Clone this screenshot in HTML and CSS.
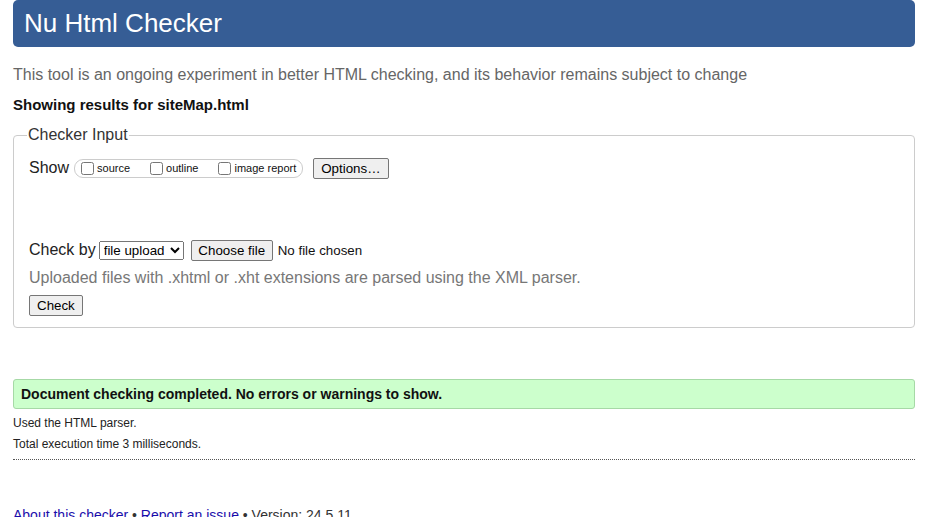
FILE: index.html
```html
<!DOCTYPE html>
<html>
<head>
<meta charset="utf-8">
<title>Nu Html Checker</title>
<link rel="stylesheet" href="styles.css">
</head>
<body>
<h1 class="title">Nu Html Checker</h1>
<p class="intro">This tool is an ongoing experiment in better HTML checking, and its behavior remains subject to change</p>
<p class="showing">Showing results for siteMap.html</p>
<fieldset class="input">
  <legend class="legend">Checker Input</legend>
  <div class="show-row">
    <span class="lbl">Show</span>
    <span class="opts">
      <label class="opt"><input type="checkbox" class="cb">source</label>
      <label class="opt"><input type="checkbox" class="cb">outline</label>
      <label class="opt"><input type="checkbox" class="cb">image report</label>
    </span>
    <button class="btn" type="button">Options…</button>
  </div>
  <div class="check-row">
    <span class="lbl">Check by</span>
    <select class="sel"><option>file upload</option></select>
    <button class="btn choose" type="button">Choose file</button>
    <span class="nofile">No file chosen</span>
  </div>
  <p class="note">Uploaded files with .xhtml or .xht extensions are parsed using the XML parser.</p>
  <button class="btn check" type="button">Check</button>
</fieldset>
<div class="success">Document checking completed. No errors or warnings to show.</div>
<p class="small">Used the HTML parser.</p>
<p class="small">Total execution time 3 milliseconds.</p>
<hr class="sep">
<p class="footer"><a href="#">About this checker</a> • <a href="#">Report an issue</a> • Version: 24.5.11</p>
</body>
</html>
```
FILE: styles.css
```css
html, body {
  margin: 0;
  padding: 0;
  background: #fff;
}
body {
  padding: 0 13px;
  font-family: "Liberation Sans", Arial, sans-serif;
  color: #111;
}
.title {
  margin: 0;
  height: 47px;
  box-sizing: border-box;
  background: #365d95;
  color: #fff;
  border-radius: 5px;
  font-weight: normal;
  font-size: 26px;
  line-height: 46px;
  padding-left: 11px;
}
.intro {
  margin: 18px 0 0;
  font-size: 16px;
  line-height: 20px;
  color: #666;
}
.showing {
  margin: 10px 0 0;
  font-size: 15px;
  line-height: 20px;
  font-weight: bold;
}
.input {
  margin: 11px 0 0;
  padding: 13px 15px 11px;
  border: 1px solid #ccc;
  border-radius: 4px;
  min-width: 0;
}
.legend {
  font-size: 16px;
  color: #333;
  padding: 0 1px;
  margin-left: -2px;
}
.show-row {
  display: flex;
  align-items: center;
  height: 22px;
}
.lbl {
  font-size: 16px;
  color: #222;
  margin-right: 5px;
}
.opts {
  display: inline-flex;
  align-items: center;
  height: 19px;
  box-sizing: border-box;
  border: 1px solid #ccc;
  border-radius: 9px;
  padding: 0 6px;
  margin-right: 10px;
}
.opt {
  display: inline-flex;
  align-items: center;
  font-size: 11px;
  margin-right: 20px;
}
.opt:last-child {
  margin-right: 0;
}
.cb {
  margin: 0 3px 0 0;
  width: 13px;
  height: 13px;
}
.btn {
  font-family: "Liberation Sans", Arial, sans-serif;
  font-size: 13.33px;
  padding: 1px 7px;
  height: 21px;
  border: 1px solid #767676;
  border-radius: 2px;
  background: #efefef;
  color: #000;
}
.check-row {
  display: flex;
  align-items: center;
  margin-top: 60px;
  height: 22px;
}
.check-row .lbl {
  margin-right: 3px;
}
.sel {
  font-family: "Liberation Sans", Arial, sans-serif;
  font-size: 13.33px;
  height: 19px;
  width: 85px;
  margin-right: 7px;
}
.choose {
  width: 82px;
  padding: 1px 4px;
}
.nofile {
  font-size: 13.33px;
  margin-left: 5px;
}
.note {
  margin: 7px 0 0;
  font-size: 16px;
  line-height: 20px;
  color: #777;
}
.check {
  margin-top: 7px;
}
.success {
  margin-top: 51px;
  height: 30px;
  box-sizing: border-box;
  background: #ccffcc;
  border: 1px solid #a6d9a6;
  border-radius: 3px;
  padding-left: 7px;
  font-size: 14px;
  font-weight: bold;
  line-height: 28px;
  color: #111;
}
.small {
  margin: 7px 0 0;
  font-size: 12px;
  line-height: 15px;
  color: #222;
}
.small + .small {
  margin-top: 6px;
}
.sep {
  margin: 7px 0 0;
  border: 0;
  border-top: 1px dotted #555;
  height: 0;
}
.footer {
  margin: 47px 0 0;
  font-size: 14px;
  color: #333;
}
.footer a {
  color: #1a0dab;
  text-decoration: underline;
}
```
